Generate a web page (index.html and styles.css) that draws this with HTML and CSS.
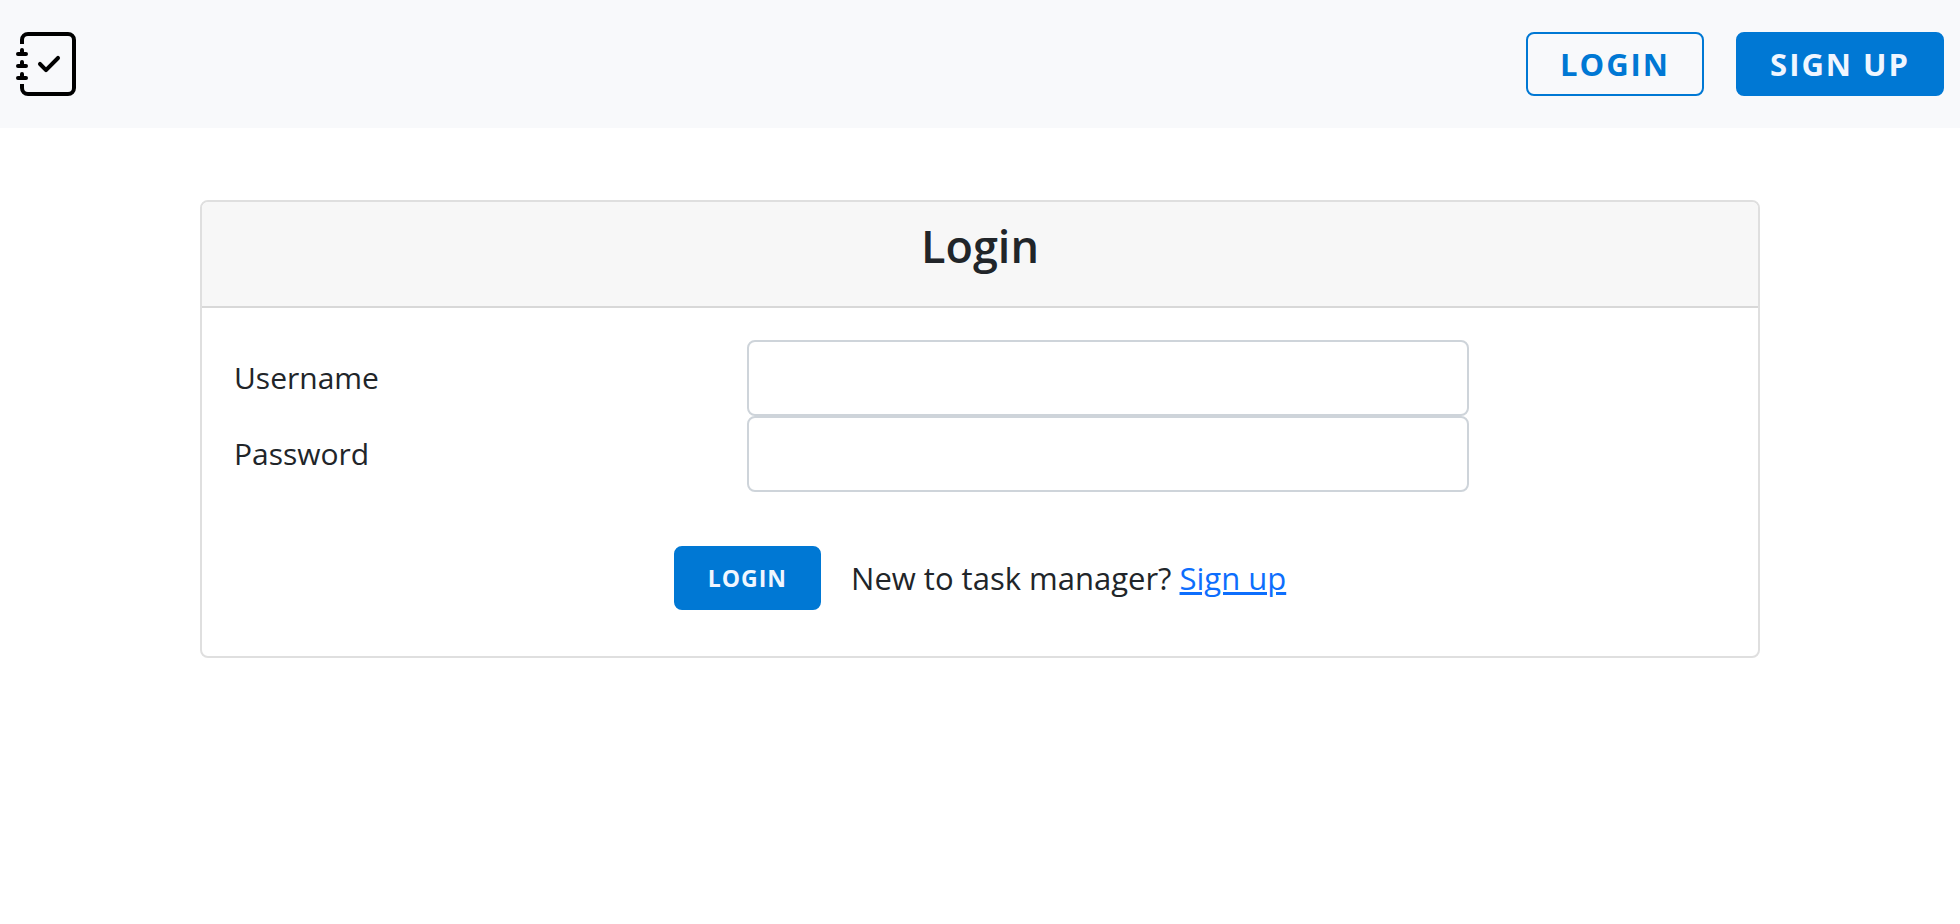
FILE: index.html
```html
<!DOCTYPE html>
<html lang="en">
<head>
<meta charset="utf-8">
<meta name="viewport" content="width=device-width, initial-scale=1">
<title>Login</title>
<link rel="stylesheet" href="styles.css">
</head>
<body>
<header class="navbar">
  <a class="brand" href="#" aria-label="Home">
    <svg class="brand-icon" viewBox="0 0 16 16" fill="currentColor" aria-hidden="true">
      <path fill-rule="evenodd" d="M10.854 6.146a.5.5 0 0 1 0 .708l-3 3a.5.5 0 0 1-.708 0l-1.500-1.500a.5.5 0 1 1 .708-.708L7.500 8.793l2.646-2.647a.5.5 0 0 1 .708 0z"/>
      <path d="M3 0h10a2 2 0 0 1 2 2v12a2 2 0 0 1-2 2H3a2 2 0 0 1-2-2v-1h1v1a1 1 0 0 0 1 1h10a1 1 0 0 0 1-1V2a1 1 0 0 0-1-1H3a1 1 0 0 0-1 1v1H1V2a2 2 0 0 1 2-2z"/>
      <path d="M1 5v-.5a.5.5 0 0 1 1 0V5h.5a.5.5 0 0 1 0 1h-2a.5.5 0 0 1 0-1H1zm0 3v-.5a.5.5 0 0 1 1 0V8h.5a.5.5 0 0 1 0 1h-2a.5.5 0 0 1 0-1H1zm0 3v-.5a.5.5 0 0 1 1 0v.5h.5a.5.5 0 0 1 0 1h-2a.5.5 0 0 1 0-1H1z"/>
    </svg>
  </a>
  <nav class="nav-actions">
    <button type="button" class="btn btn-outline">LOGIN</button>
    <button type="button" class="btn btn-primary">SIGN UP</button>
  </nav>
</header>
<main class="page">
  <section class="card">
    <div class="card-header"><h2 class="card-title">Login</h2></div>
    <form class="card-body">
      <div class="field">
        <label class="field-label" for="username">Username</label>
        <input class="field-input" id="username" name="username" type="text">
      </div>
      <div class="field">
        <label class="field-label" for="password">Password</label>
        <input class="field-input" id="password" name="password" type="password">
      </div>
      <div class="form-actions">
        <button type="submit" class="btn btn-primary btn-small">LOGIN</button>
        <span>New to task manager? <a class="link" href="#">Sign up</a></span>
      </div>
    </form>
  </section>
</main>
</body>
</html>
```
FILE: styles.css
```css
* {
  box-sizing: border-box;
}

body {
  margin: 0;
  background: #fff;
  color: #212529;
  font-family: "Segoe UI", "Open Sans", "Noto Sans", sans-serif;
  font-size: 30px;
  line-height: 48px;
}

.navbar {
  display: flex;
  align-items: center;
  justify-content: space-between;
  padding: 32px 16px;
  background: #f8f9fb;
}

.brand {
  display: flex;
  color: #000;
}

.brand-icon {
  width: 64px;
  height: 64px;
}

.nav-actions {
  display: flex;
  gap: 32px;
}

.btn {
  height: 64px;
  padding: 0 32px;
  border: 2px solid #0078d4;
  border-radius: 8px;
  font-family: inherit;
  font-size: 31px;
  font-weight: 700;
  line-height: 48px;
  letter-spacing: 2px;
  cursor: pointer;
}

.btn-outline {
  background: transparent;
  color: #0078d4;
}

.btn-primary {
  background: #0078d4;
  color: #f0f6ff;
}

.btn-small {
  font-size: 23px;
  letter-spacing: 1px;
}

.page {
  padding: 72px 200px;
}

.card {
  border: 2px solid #dfdfdf;
  border-radius: 8px;
}

.card-header {
  padding: 16px 32px 32px;
  border-bottom: 2px solid #d8d8d8;
  border-radius: 6px 6px 0 0;
  background: #f7f7f7;
  text-align: center;
}

.card-title {
  margin: 0;
  font-size: 45px;
  font-weight: 600;
  line-height: 56px;
}

.card-body {
  padding: 32px 32px 46px;
}

.field {
  display: grid;
  grid-template-columns: repeat(12, 1fr);
  column-gap: 48px;
  align-items: center;
}

.field-label {
  grid-column: span 4;
}

.field-input {
  grid-column: span 6;
  width: 100%;
  height: 76px;
  padding: 12px 24px;
  border: 2px solid #ced4da;
  border-radius: 8px;
  background: #fff;
  color: inherit;
  font: inherit;
}

.form-actions {
  display: flex;
  align-items: center;
  justify-content: center;
  gap: 30px;
  margin-top: 54px;
  font-size: 31px;
}

.link {
  color: #0d6efd;
}
```
